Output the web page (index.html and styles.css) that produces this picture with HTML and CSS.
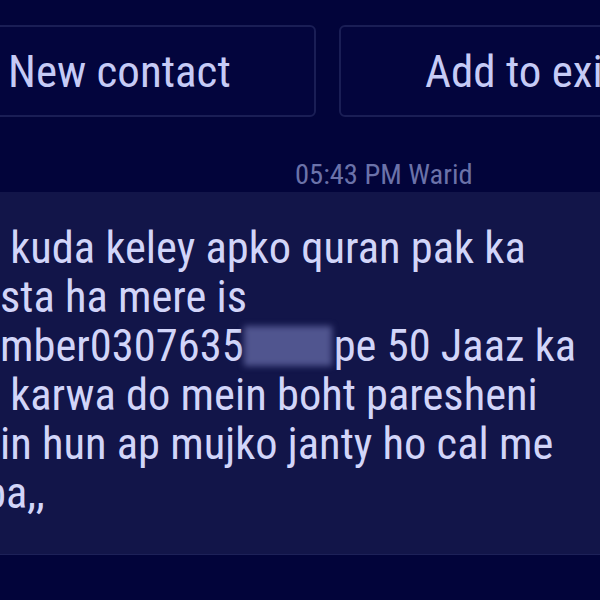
FILE: index.html
```html
<!DOCTYPE html>
<html>
<head>
<meta charset="utf-8">
<link rel="stylesheet" href="styles.css">
</head>
<body>
<div class="screen">
  <div class="actions">
    <div class="btn">New contact</div>
    <div class="btn">Add to existing</div>
  </div>
  <div class="meta">05:43 PM Warid</div>
  <div class="bubble">
    <p class="msg"><span class="ln"> kuda keley apko quran pak ka</span><span class="ln">sta ha mere is</span><span class="ln">mber0307635<span class="redact"></span>pe 50 Jaaz ka</span><span class="ln"> karwa do mein boht paresheni</span><span class="ln">in hun ap mujko janty ho cal me</span><span class="ln"><span class="cut">b</span>a,,</span></p>
  </div>
</div>
</body>
</html>
```
FILE: styles.css
```css
html, body {
  margin: 0;
  padding: 0;
  background: #02043a;
  overflow: hidden;
}
.screen {
  width: 600px;
  height: 600px;
  overflow: hidden;
  font-family: Roboto, "Liberation Sans", sans-serif;
  font-stretch: 85%;
}
.actions {
  display: flex;
  gap: 23px;
  margin-left: -78px;
  margin-top: 25px;
  width: 811px;
}
.btn {
  flex: 1;
  height: 92px;
  box-sizing: border-box;
  border: 2px solid #1a1e55;
  border-radius: 6px;
  background: #03053d;
  display: flex;
  align-items: center;
  padding-left: 84px;
  color: #c6cbf6;
  font-size: 45px;
  white-space: nowrap;
  overflow: hidden;
}
.meta {
  height: 75px;
  box-sizing: border-box;
  padding-top: 43px;
  padding-left: 295px;
  font-size: 28.5px;
  line-height: 30px;
  color: #6b72a9;
}
.bubble {
  background: #121549;
  border-bottom: 1px solid #1d2158;
  padding: 32px 0 36px 0;
}
.msg {
  margin: 0;
  font-size: 44.5px;
  line-height: 49px;
  color: #d2d5f9;
  white-space: pre;
}
.ln {
  display: block;
}
.redact {
  display: inline-block;
  width: 88px;
  height: 40px;
  vertical-align: -5px;
  background: #50558f;
  filter: blur(3px);
  margin-right: 2px;
}
.cut {
  margin-left: -16px;
}
```
